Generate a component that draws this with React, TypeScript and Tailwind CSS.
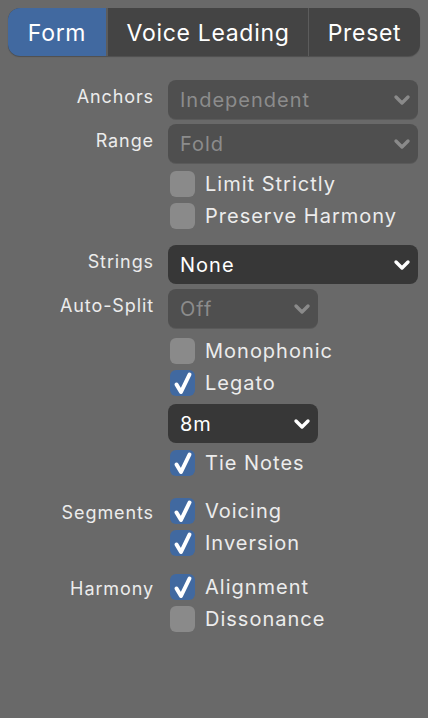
import type { ReactNode } from 'react';

const Chevron = ({ disabled }: { disabled?: boolean }) => (
  <svg width="18" height="12" viewBox="0 0 18 12" className="shrink-0">
    <path
      d="M3 3 L9 9 L15 3"
      fill="none"
      stroke={disabled ? '#8a8a8a' : '#ffffff'}
      strokeWidth="3.4"
      strokeLinecap="round"
      strokeLinejoin="round"
    />
  </svg>
);

const Select = ({ value, disabled, wide }: { value: string; disabled?: boolean; wide?: boolean }) => (
  <div
    className={
      'flex h-[39px] items-center justify-between rounded-[8px] pl-[12px] pr-[7px] ' +
      (wide ? 'w-[250px] ' : 'w-[150px] ') +
      (disabled
        ? 'bg-[#4f4f4f] text-[#8c8c8c] shadow-[0_1px_0_#5a5a5a]'
        : 'bg-[#373737] text-white')
    }
  >
    <span className="text-[20px] leading-none tracking-[0.05em]">{value}</span>
    <Chevron disabled={disabled} />
  </div>
);

const Checkbox = ({ label, checked }: { label: string; checked?: boolean }) => (
  <div className="flex h-[32px] items-center">
    <div
      className={
        'ml-[2px] flex h-[26px] w-[25px] items-center justify-center rounded-[6px] ' +
        (checked ? 'bg-[#4169a0]' : 'bg-[#8a8a8a]')
      }
    >
      {checked && (
        <svg width="25" height="26" viewBox="0 0 25 26">
          <path
            d="M6.5 14.5 L11 22 L19.5 4.5"
            fill="none"
            stroke="#ffffff"
            strokeWidth="4"
            strokeLinecap="round"
            strokeLinejoin="round"
          />
        </svg>
      )}
    </div>
    <span className="ml-[10px] text-[20px] leading-none tracking-[0.05em] text-[#ececec]">{label}</span>
  </div>
);

// label sits a little high next to a select, a little low next to a checkbox
const Row = ({
  label,
  children,
  className = '',
  check,
}: {
  label?: string;
  children: ReactNode;
  className?: string;
  check?: boolean;
}) => (
  <div className={'flex items-center ' + className}>
    <div
      className={
        'w-[154px] text-right text-[18px] leading-none tracking-[0.05em] text-[#ececec] ' +
        (check ? 'mt-[4px]' : 'mb-[5px]')
      }
    >
      {label}
    </div>
    <div className="ml-[14px]">{children}</div>
  </div>
);

export default function App() {
  return (
    <div className="min-h-[718px] w-[428px] bg-[#696969] font-[Inter,sans-serif] antialiased">
      {/* Tab bar */}
      <div className="px-[8px] pt-[8px]">
        <div className="flex h-[48px] overflow-hidden rounded-[12px] bg-[#444444] text-[23px] tracking-[0.03em] text-white shadow-[0_1px_1px_rgba(0,0,0,0.25)]">
          <div className="flex w-[98px] items-center justify-center bg-[#4169a0] pt-[3px]">Form</div>
          <div className="w-[2px] bg-[#5c5c5c]" />
          <div className="flex w-[200px] items-center justify-center pt-[3px]">Voice Leading</div>
          <div className="w-[1px] bg-[#5c5c5c]" />
          <div className="flex flex-1 items-center justify-center pt-[3px]">Preset</div>
        </div>
      </div>

      {/* Form fields */}
      <div className="mt-[24px] flex flex-col">
        <Row label="Anchors">
          <Select value="Independent" disabled wide />
        </Row>
        <Row label="Range" className="mt-[5px]">
          <Select value="Fold" disabled wide />
        </Row>
        <Row className="mt-[5px]" check>
          <Checkbox label="Limit Strictly" />
        </Row>
        <Row check>
          <Checkbox label="Preserve Harmony" />
        </Row>

        <Row label="Strings" className="mt-[13px]">
          <Select value="None" wide />
        </Row>
        <Row label="Auto-Split" className="mt-[5px]">
          <Select value="Off" disabled />
        </Row>
        <Row className="mt-[7px]" check>
          <Checkbox label="Monophonic" />
        </Row>
        <Row check>
          <Checkbox label="Legato" checked />
        </Row>
        <Row className="mt-[5px]">
          <Select value="8m" />
        </Row>
        <Row className="mt-[4px]" check>
          <Checkbox label="Tie Notes" checked />
        </Row>

        <Row label="Segments" className="mt-[16px]" check>
          <Checkbox label="Voicing" checked />
        </Row>
        <Row check>
          <Checkbox label="Inversion" checked />
        </Row>

        <Row label="Harmony" className="mt-[12px]" check>
          <Checkbox label="Alignment" checked />
        </Row>
        <Row check>
          <Checkbox label="Dissonance" />
        </Row>
      </div>
    </div>
  );
}
